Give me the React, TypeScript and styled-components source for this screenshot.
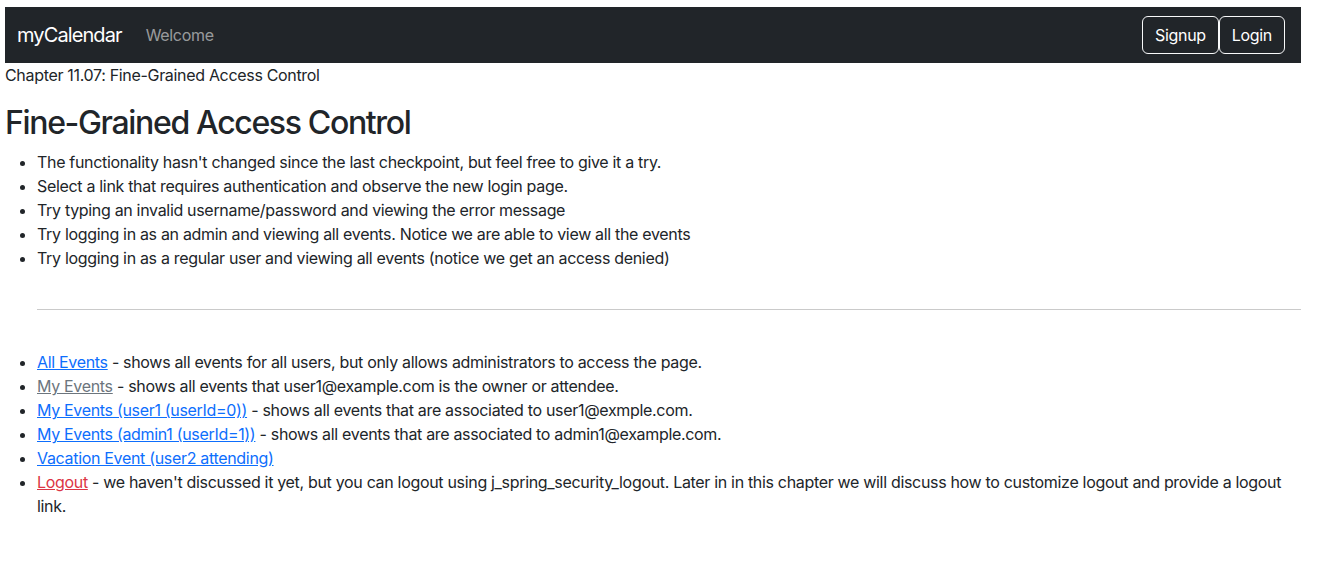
import React from 'react';
import styled, { createGlobalStyle } from 'styled-components';

const GlobalStyle = createGlobalStyle`
  html, body { margin: 0; padding: 0; background: #fff; }
  body {
    font-family: Inter, "Liberation Sans", sans-serif;
    font-size: 16px;
    line-height: 1.5;
    letter-spacing: -0.02em;
    color: #212529;
  }
`;

const Page = styled.div`
  padding: 7px 23px 0 5px;
`;

const Navbar = styled.nav`
  display: flex;
  align-items: center;
  height: 56px;
  padding: 0 16px 0 12px;
  background: #212529;
`;

const Brand = styled.a`
  font-size: 20px;
  letter-spacing: -0.045em;
  color: #fff;
  text-decoration: none;
  margin-right: 24px;
`;

const NavLink = styled.a`
  color: rgba(255, 255, 255, 0.55);
  text-decoration: none;
`;

const Spacer = styled.div`
  flex: 1;
`;

const OutlineButton = styled.button`
  font-family: inherit;
  font-size: 16px;
  line-height: 1.5;
  letter-spacing: -0.02em;
  height: 38px;
  padding: 0 12px;
  color: #fff;
  background: transparent;
  border: 1px solid #f8f9fa;
  border-radius: 6px;
  cursor: pointer;
`;

const Chapter = styled.div`
  line-height: 24px;
`;

const Title = styled.h2`
  font-size: 32px;
  font-weight: 500;
  line-height: 1.2;
  letter-spacing: -0.042em;
  margin: 17px 0 8px;
`;

const List = styled.ul<{ $top?: number }>`
  margin: ${p => p.$top ?? 0}px 0 0;
  padding-left: 32px;
`;

const Rule = styled.hr`
  margin: 39px 0 0 32px;
  border: 0;
  border-top: 1px solid #cacaca;
`;

const Link = styled.a<{ $tone?: 'primary' | 'muted' | 'danger' }>`
  color: ${p => (p.$tone === 'muted' ? '#6c757d' : p.$tone === 'danger' ? '#dc3545' : '#0d6efd')};
  text-decoration: underline;
`;

const notes = [
  "The functionality hasn't changed since the last checkpoint, but feel free to give it a try.",
  'Select a link that requires authentication and observe the new login page.',
  'Try typing an invalid username/password and viewing the error message',
  'Try logging in as an admin and viewing all events. Notice we are able to view all the events',
  'Try logging in as a regular user and viewing all events (notice we get an access denied)',
];

const links: { label: string; tone?: 'primary' | 'muted' | 'danger'; text?: string }[] = [
  { label: 'All Events', text: ' - shows all events for all users, but only allows administrators to access the page.' },
  { label: 'My Events', tone: 'muted', text: ' - shows all events that user1@example.com is the owner or attendee.' },
  { label: 'My Events (user1 (userId=0))', text: ' - shows all events that are associated to user1@exmple.com.' },
  { label: 'My Events (admin1 (userId=1))', text: ' - shows all events that are associated to admin1@example.com.' },
  { label: 'Vacation Event (user2 attending)' },
  {
    label: 'Logout',
    tone: 'danger',
    text: " - we haven't discussed it yet, but you can logout using j_spring_security_logout. Later in in this chapter we will discuss how to customize logout and provide a logout link.",
  },
];

export default function App() {
  return (
    <Page>
      <GlobalStyle />
      <Navbar>
        <Brand href="#">myCalendar</Brand>
        <NavLink href="#">Welcome</NavLink>
        <Spacer />
        <OutlineButton>Signup</OutlineButton>
        <OutlineButton>Login</OutlineButton>
      </Navbar>
      <Chapter>Chapter 11.07: Fine-Grained Access Control</Chapter>
      <Title>Fine-Grained Access Control</Title>
      <List>
        {notes.map((n, i) => (
          <li key={i}>{n}</li>
        ))}
      </List>
      <Rule />
      <List $top={40}>
        {links.map((l, i) => (
          <li key={i}>
            <Link href="#" $tone={l.tone}>{l.label}</Link>
            {l.text}
          </li>
        ))}
      </List>
    </Page>
  );
}
